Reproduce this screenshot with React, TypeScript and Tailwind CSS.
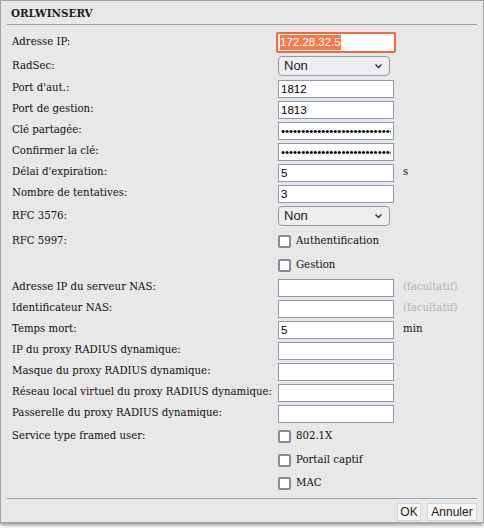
import React from "react";

const serif = "font-['DejaVu_Serif_Condensed','DejaVu_Serif',serif] [font-stretch:condensed]";
const sans = "font-['Liberation_Sans',Arial,sans-serif]";

function Label({ children }: { children: React.ReactNode }) {
  return <div className={`w-[277px] shrink-0 pl-[11px] text-[11.3px] text-[#0f0f0f] whitespace-nowrap ${serif}`}>{children}</div>;
}

function TextBox({ value = "", password = false }: { value?: string; password?: boolean }) {
  return (
    <input
      readOnly
      type={password ? "password" : "text"}
      defaultValue={value}
      className={`w-[116px] h-[18px] border border-[#8c9cac] bg-white px-[2px] text-[11.5px] text-black outline-none ${sans}`}
    />
  );
}

function Select() {
  return (
    <div className={`w-[112px] h-[20px] rounded-[4px] border border-[#8c9cac] bg-[#eeeef0] flex items-center justify-between pl-[5px] pr-[6px] text-[13px] text-[#222] ${sans}`}>
      <span>Non</span>
      <svg width="9" height="6" viewBox="0 0 9 6"><path d="M1.5 1.5 L4.5 4.5 L7.5 1.5" fill="none" stroke="#333" strokeWidth="1.4" /></svg>
    </div>
  );
}

function Check({ label }: { label: string }) {
  return (
    <div className="flex items-center gap-[5px]">
      <div className="w-[13px] h-[13px] shrink-0 rounded-[2px] border-2 border-[#8a8a96] bg-white" />
      <span className={`text-[11.3px] text-[#0f0f0f] whitespace-nowrap ${serif}`}>{label}</span>
    </div>
  );
}

function Row({ h, label, children, suffix, suffixGray }: { h: string; label?: string; children?: React.ReactNode; suffix?: string; suffixGray?: boolean }) {
  return (
    <div className={`flex items-center shrink-0 ${h}`}>
      <Label>{label}</Label>
      <div className="w-[125px] shrink-0 flex items-center">{children}</div>
      {suffix && (
        <span className={`text-[11.3px] ${serif} ${suffixGray ? "text-[#b4b4b4]" : "text-[#0f0f0f]"}`}>{suffix}</span>
      )}
    </div>
  );
}

export default function App() {
  const dots = "••••••••••••••••••••••••••••••••••••••";
  return (
    <div className="w-[484px] h-[528px] bg-white">
      <div className="w-[484px] h-[523px] bg-[#e8e8e8] border border-[#a3a3a3] shadow-[0_2px_4px_rgba(0,0,0,0.45)] flex flex-col px-[6px]">
        <div className={`h-[23px] shrink-0 flex items-center pl-[4px] pt-[2px] text-[11.5px] font-bold text-[#1e1e1e] ${serif}`}>ORLWINSERV</div>
        <div className="h-px shrink-0 bg-[#8fa6ba]" />
        <div className="flex flex-col shrink-0 -ml-[6px] pt-[6px]">
          <Row h="h-[23px]" label="Adresse IP:">
            <div className={`ml-[-2px] w-[120px] h-[21px] rounded-[2px] border-2 border-[#f06b3c] bg-white flex items-center pl-[2px] text-[11.5px] ${sans}`}>
              <span className="bg-[#f47a4a] text-white leading-[15px]">172.28.32.5</span>
            </div>
          </Row>
          <Row h="h-[24px]" label="RadSec:"><Select /></Row>
          <Row h="h-[21px]" label="Port d'aut.:"><TextBox value="1812" /></Row>
          <Row h="h-[21px]" label="Port de gestion:"><TextBox value="1813" /></Row>
          <Row h="h-[21px]" label="Clé partagée:"><TextBox value={dots} password /></Row>
          <Row h="h-[21px]" label="Confirmer la clé:"><TextBox value={dots} password /></Row>
          <Row h="h-[21px]" label="Délai d'expiration:" suffix="s"><TextBox value="5" /></Row>
          <Row h="h-[21px]" label="Nombre de tentatives:"><TextBox value="3" /></Row>
          <Row h="h-[24px]" label="RFC 3576:"><Select /></Row>
          <Row h="h-[26px]" label="RFC 5997:"><Check label="Authentification" /></Row>
          <Row h="h-[23px]"><Check label="Gestion" /></Row>
          <Row h="h-[21px]" label="Adresse IP du serveur NAS:" suffix="(facultatif)" suffixGray><TextBox /></Row>
          <Row h="h-[21px]" label="Identificateur NAS:" suffix="(facultatif)" suffixGray><TextBox /></Row>
          <Row h="h-[21px]" label="Temps mort:" suffix="min"><TextBox value="5" /></Row>
          <Row h="h-[21px]" label="IP du proxy RADIUS dynamique:"><TextBox /></Row>
          <Row h="h-[21px]" label="Masque du proxy RADIUS dynamique:"><TextBox /></Row>
          <Row h="h-[21px]" label="Réseau local virtuel du proxy RADIUS dynamique:"><TextBox /></Row>
          <Row h="h-[21px]" label="Passerelle du proxy RADIUS dynamique:"><TextBox /></Row>
          <Row h="h-[24px]" label="Service type framed user:"><Check label="802.1X" /></Row>
          <Row h="h-[24px]"><Check label="Portail captif" /></Row>
          <Row h="h-[23px]"><Check label="MAC" /></Row>
        </div>
        <div className="mt-[3px] h-px shrink-0 bg-[#8fa6ba]" />
        <div className={`flex justify-end gap-[6px] pt-[4px] text-[12px] text-[#222] ${sans}`}>
          <button className="h-[18px] w-[24px] bg-[#f6f6f6] border border-[#d6d6d6] leading-none">OK</button>
          <button className="h-[18px] w-[50px] bg-[#f6f6f6] border border-[#d6d6d6] leading-none">Annuler</button>
        </div>
      </div>
    </div>
  );
}
